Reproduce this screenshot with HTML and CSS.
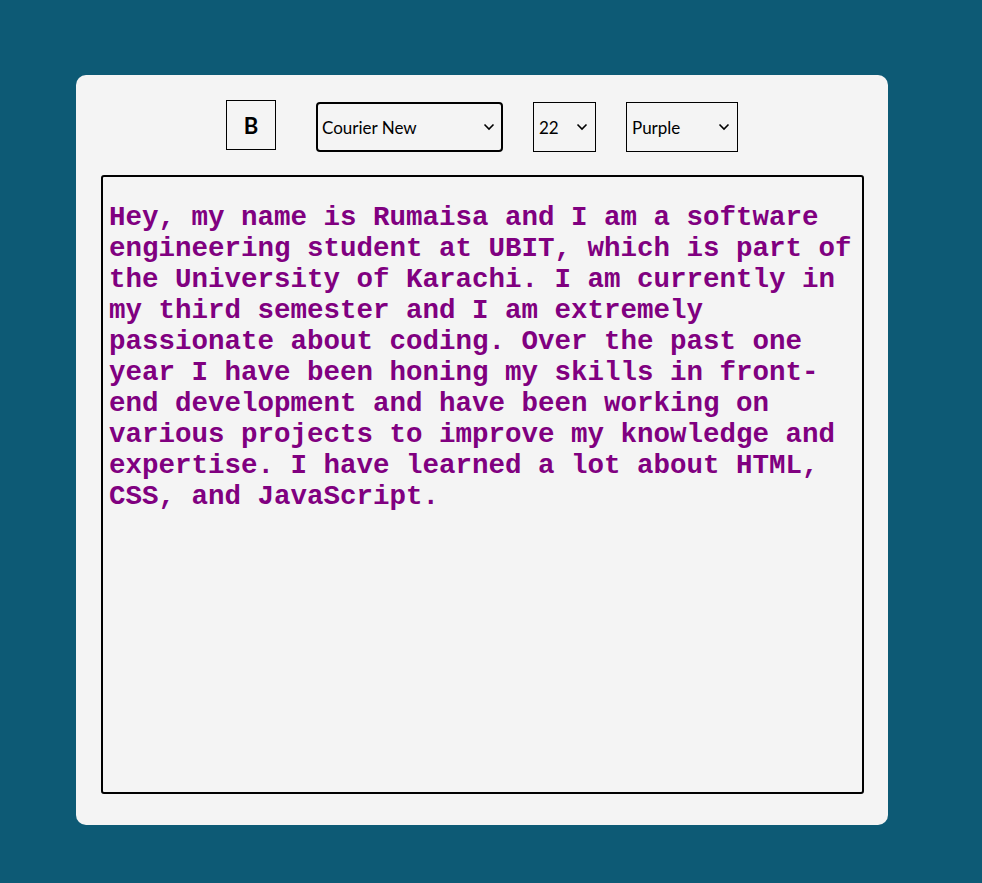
FILE: index.html
```html
<!DOCTYPE html>
<html lang="en">
<head>
<meta charset="utf-8">
<title>Text Editor</title>
<link rel="stylesheet" href="styles.css">
</head>
<body>
<main class="card">
  <div class="toolbar">
    <button class="bold-btn" type="button">B</button>
    <div class="select-wrap font-wrap">
      <select class="sel sel-font">
        <option>Courier New</option>
        <option>Arial</option>
        <option>Times New Roman</option>
      </select>
      <svg class="chev" viewBox="0 0 12 8" width="12" height="8"><path d="M1.5 1.5 L6 6 L10.5 1.5" fill="none" stroke="#000" stroke-width="1.6"/></svg>
    </div>
    <div class="select-wrap size-wrap">
      <select class="sel sel-size">
        <option>22</option>
        <option>16</option>
        <option>18</option>
      </select>
      <svg class="chev" viewBox="0 0 12 8" width="12" height="8"><path d="M1.5 1.5 L6 6 L10.5 1.5" fill="none" stroke="#000" stroke-width="1.6"/></svg>
    </div>
    <div class="select-wrap color-wrap">
      <select class="sel sel-color">
        <option>Purple</option>
        <option>Black</option>
        <option>Red</option>
      </select>
      <svg class="chev" viewBox="0 0 12 8" width="12" height="8"><path d="M1.5 1.5 L6 6 L10.5 1.5" fill="none" stroke="#000" stroke-width="1.6"/></svg>
    </div>
  </div>
  <textarea class="editor" spellcheck="false">Hey, my name is Rumaisa and I am a software engineering student at UBIT, which is part of the University of Karachi. I am currently in my third semester and I am extremely passionate about coding. Over the past one year I have been honing my skills in front-end development and have been working on various projects to improve my knowledge and expertise. I have learned a lot about HTML, CSS, and JavaScript.</textarea>
</main>
</body>
</html>
```

FILE: styles.css
```css
html, body {
  margin: 0;
  padding: 0;
}

body {
  background: #0d5a75;
  min-height: 883px;
  font-family: "Lato", "Noto Sans", sans-serif;
}

.card {
  box-sizing: border-box;
  width: 812px;
  height: 750px;
  margin: 75px 0 0 76px;
  padding: 25px 25px 0 25px;
  background: #f4f4f4;
  border-radius: 10px;
}

.toolbar {
  display: flex;
  justify-content: center;
  align-items: flex-start;
  height: 52px;
}

.bold-btn {
  box-sizing: border-box;
  width: 50px;
  height: 50px;
  margin-right: 40px;
  padding: 0;
  border: 1px solid #000;
  border-radius: 0;
  background: #f4f4f4;
  color: #000;
  font-family: "Lato", "Noto Sans", sans-serif;
  font-weight: 700;
  font-size: 22px;
  cursor: pointer;
}

.select-wrap {
  position: relative;
  margin-top: 2px;
}

.size-wrap,
.color-wrap {
  margin-left: 30px;
}

.sel {
  appearance: none;
  -webkit-appearance: none;
  box-sizing: border-box;
  height: 50px;
  margin: 0;
  padding: 0 0 0 5px;
  border: 1px solid #000;
  border-radius: 0;
  background: #f4f4f4;
  color: #000;
  font-family: "Lato", "Noto Sans", sans-serif;
  font-size: 17px;
}

.sel-font {
  width: 187px;
  border: 2px solid #000;
  border-radius: 4px;
  padding-left: 4px;
}

.sel-size {
  width: 63px;
}

.sel-color {
  width: 112px;
}

.chev {
  position: absolute;
  right: 8px;
  top: 21px;
  pointer-events: none;
}

.editor {
  display: block;
  box-sizing: border-box;
  width: 763px;
  height: 619px;
  margin-top: 23px;
  padding: 25px 6px 6px 6px;
  border: 2px solid #000;
  border-radius: 3px;
  background: #f4f4f4;
  color: #800080;
  font-family: "Liberation Mono", "Courier New", monospace;
  font-weight: 700;
  font-size: 27.5px;
  line-height: 31px;
  resize: none;
  outline: none;
}
```
